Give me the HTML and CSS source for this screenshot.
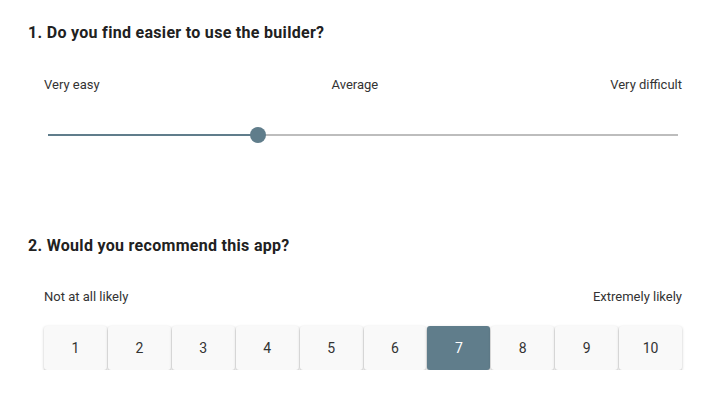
FILE: index.html
```html
<!DOCTYPE html>
<html>
<head>
<meta charset="utf-8">
<link rel="stylesheet" href="styles.css">
</head>
<body>
<div class="page">
  <section class="question q1">
    <h2 class="title">1. Do you find easier to use the builder?</h2>
    <div class="body">
      <div class="labels slider-labels">
        <span>Very easy</span>
        <span>Average</span>
        <span>Very difficult</span>
      </div>
      <div class="slider">
        <div class="track">
          <div class="track-active" style="width:33.33%"></div>
          <div class="thumb" style="left:33.33%"></div>
        </div>
      </div>
    </div>
  </section>
  <section class="question q2">
    <h2 class="title">2. Would you recommend this app?</h2>
    <div class="body">
      <div class="labels">
        <span>Not at all likely</span>
        <span>Extremely likely</span>
      </div>
      <div class="scale">
        <button class="opt">1</button>
        <button class="opt">2</button>
        <button class="opt">3</button>
        <button class="opt">4</button>
        <button class="opt">5</button>
        <button class="opt">6</button>
        <button class="opt selected">7</button>
        <button class="opt">8</button>
        <button class="opt">9</button>
        <button class="opt">10</button>
      </div>
    </div>
  </section>
</div>
</body>
</html>
```
FILE: styles.css
```css
html, body {
  margin: 0;
  padding: 0;
  background: #ffffff;
}
body {
  font-family: Roboto, "Liberation Sans", sans-serif;
  color: #333333;
}
.page {
  padding: 0 38px 0 28px;
}
.title {
  margin: 0;
  font-size: 16px;
  line-height: 20px;
  font-weight: 700;
  letter-spacing: 0.3px;
  color: #212121;
}
.q1 .title {
  padding-top: 23px;
}
.q2 {
  padding-top: 91px;
}
.body {
  padding-left: 16px;
}
.labels {
  display: flex;
  justify-content: space-between;
  font-size: 13px;
  line-height: 16px;
  color: #333333;
  margin-top: 34px;
}
.q2 .labels {
  margin-top: 33px;
}
.slider {
  margin-top: 32px;
  height: 20px;
  padding: 0 4px;
  display: flex;
  align-items: center;
}
.track {
  position: relative;
  flex: 1;
  height: 2px;
  background: #bdbdbd;
}
.track-active {
  height: 2px;
  background: #607d8b;
}
.thumb {
  position: absolute;
  top: 50%;
  width: 16px;
  height: 16px;
  margin: -8px 0 0 -8px;
  border-radius: 50%;
  background: #607d8b;
}
.scale {
  display: flex;
  gap: 1px;
  margin-top: 21px;
}
.opt {
  flex: 1;
  height: 44px;
  border: none;
  border-radius: 3px;
  background: #f9f9f9;
  box-shadow: 0 1px 3px rgba(0, 0, 0, 0.22), 0 1px 1px rgba(0, 0, 0, 0.08);
  font-family: inherit;
  font-size: 14px;
  color: #333333;
  padding: 0;
}
.opt.selected {
  background: #607d8b;
  color: #ffffff;
}
```
